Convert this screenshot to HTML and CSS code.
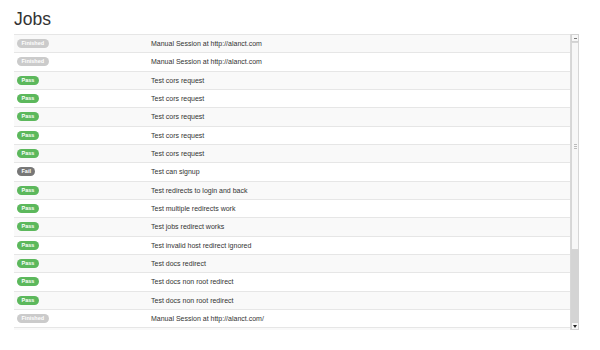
FILE: index.html
```html
<!DOCTYPE html>
<html lang="en">
<head>
  <meta charset="UTF-8">
  <title>Jobs</title>
  <link rel="stylesheet" href="styles.css">
</head>
<body>
  <h1 class="page-title">Jobs</h1>

  <div class="jobs-panel">
    <div class="jobs-list">
      <div class="job-row"><span class="label label-finished">Finished</span><span class="job-name">Manual Session at http://alanct.com</span></div>
      <div class="job-row"><span class="label label-finished">Finished</span><span class="job-name">Manual Session at http://alanct.com</span></div>
      <div class="job-row"><span class="label label-pass">Pass</span><span class="job-name">Test cors request</span></div>
      <div class="job-row"><span class="label label-pass">Pass</span><span class="job-name">Test cors request</span></div>
      <div class="job-row"><span class="label label-pass">Pass</span><span class="job-name">Test cors request</span></div>
      <div class="job-row"><span class="label label-pass">Pass</span><span class="job-name">Test cors request</span></div>
      <div class="job-row"><span class="label label-pass">Pass</span><span class="job-name">Test cors request</span></div>
      <div class="job-row"><span class="label label-fail">Fail</span><span class="job-name">Test can signup</span></div>
      <div class="job-row"><span class="label label-pass">Pass</span><span class="job-name">Test redirects to login and back</span></div>
      <div class="job-row"><span class="label label-pass">Pass</span><span class="job-name">Test multiple redirects work</span></div>
      <div class="job-row"><span class="label label-pass">Pass</span><span class="job-name">Test jobs redirect works</span></div>
      <div class="job-row"><span class="label label-pass">Pass</span><span class="job-name">Test invalid host redirect ignored</span></div>
      <div class="job-row"><span class="label label-pass">Pass</span><span class="job-name">Test docs redirect</span></div>
      <div class="job-row"><span class="label label-pass">Pass</span><span class="job-name">Test docs non root redirect</span></div>
      <div class="job-row"><span class="label label-pass">Pass</span><span class="job-name">Test docs non root redirect</span></div>
      <div class="job-row"><span class="label label-finished">Finished</span><span class="job-name">Manual Session at http://alanct.com/</span></div>
      <div class="job-row job-row-more"></div>
    </div>

    <div class="scrollbar">
      <div class="scroll-btn scroll-up"><span class="arrow-up"></span></div>
      <div class="scroll-thumb"><span class="grip"></span></div>
      <div class="scroll-track"></div>
      <div class="scroll-btn scroll-down"><span class="arrow-down"></span></div>
    </div>
  </div>
</body>
</html>
```

FILE: styles.css
```css
body {
  font-family: "Liberation Sans", Arial, sans-serif;
  margin: 0;
  padding: 0 21px 0 14px;
  background: #fff;
  color: #333;
}

.page-title {
  font-size: 17.5px;
  font-weight: normal;
  line-height: 20px;
  margin: 0;
  padding: 9px 0 5px;
  color: #333;
}

.jobs-panel {
  display: flex;
  height: 296px;
}

.jobs-list {
  flex: 1;
  overflow: hidden;
}

.job-row {
  display: grid;
  grid-template-columns: 134px 1fr;
  align-items: center;
  height: 18.33px;
  box-sizing: border-box;
  border-top: 1px solid #e6e6e6;
  font-size: 7px;
}

.job-row:nth-child(odd) {
  background: #f9f9f9;
}

.label {
  justify-self: start;
  margin-left: 3px;
  padding: 0 4.5px;
  height: 9px;
  line-height: 9px;
  border-radius: 5px;
  font-size: 5.5px;
  font-weight: bold;
  color: #fff;
}

.label-pass {
  background: #5cb85c;
}

.label-fail {
  background: #777;
}

.label-finished {
  background: #cbcbcb;
}

.job-name {
  padding-left: 3px;
  color: #333;
}

/* fake scrollbar, the list is scrolled to the top */
.scrollbar {
  width: 9px;
  display: flex;
  flex-direction: column;
  border-left: 1px solid #d8d8d8;
  box-sizing: border-box;
}

.scroll-btn {
  height: 8px;
  background: #f7f7f7;
  border: 1px solid #d2d2d2;
  box-sizing: border-box;
  display: flex;
  align-items: center;
  justify-content: center;
}

.arrow-up {
  width: 3px;
  height: 1px;
  background: #777;
}

.arrow-down {
  width: 0;
  height: 0;
  border-left: 2.5px solid transparent;
  border-right: 2.5px solid transparent;
  border-top: 3px solid #222;
}

.scroll-thumb {
  height: 208px;
  background: #f7f7f7;
  border: 1px solid #d6d6d6;
  box-sizing: border-box;
  display: flex;
  align-items: center;
  justify-content: center;
}

.grip {
  width: 3px;
  height: 5px;
  background: repeating-linear-gradient(#bbb 0 1px, transparent 1px 2px);
}

.scroll-track {
  flex: 1;
  background: #d4d4d4;
}
```
